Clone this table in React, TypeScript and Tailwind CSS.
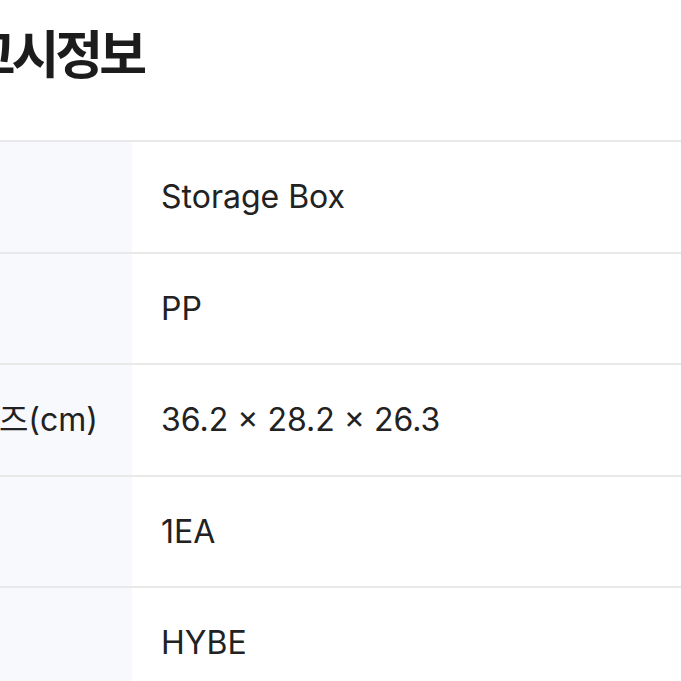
import React from "react";

const rows: { label: string; value: string; h: string }[] = [
  { label: "품명", value: "Storage Box", h: "h-[112px]" },
  { label: "재질", value: "PP", h: "h-[111px]" },
  { label: "사이즈(cm)", value: "36.2 × 28.2 × 26.3", h: "h-[112px]" },
  { label: "수량", value: "1EA", h: "h-[111px]" },
  { label: "제조", value: "HYBE", h: "h-[112px]" },
];

export default function App() {
  return (
    <div
      className="w-[681px] h-[681px] overflow-hidden bg-white text-[#222222]"
      style={{ fontFamily: 'Inter, "Noto Sans CJK KR", sans-serif' }}
    >
      <div className="w-[900px] -ml-[92px]">
        <div className="h-[140px] flex items-center">
          <h1
            className="-ml-[28px] text-[52px] font-bold leading-none tracking-[-4px] text-[#1c1c1c] -mt-[36px]"
            style={{ fontFamily: '"Noto Sans CJK KR", sans-serif' }}
          >
            상품고시정보
          </h1>
        </div>
        <div>
          {rows.map((r) => (
            <div key={r.label} className={`flex border-t-2 border-[#e9e9e9] ${r.h}`}>
              <div className="w-[224px] shrink-0 bg-[#f8f9fc] flex items-center pl-[32px] text-[32px]">
                {r.label}
              </div>
              <div className="flex-1 flex items-center pl-[29px] text-[32px]">{r.value}</div>
            </div>
          ))}
        </div>
      </div>
    </div>
  );
}
